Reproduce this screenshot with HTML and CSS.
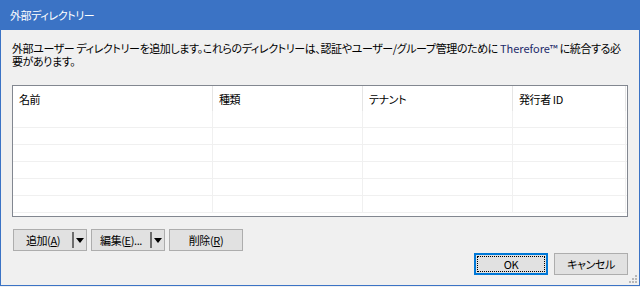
FILE: index.html
```html
<!DOCTYPE html>
<html lang="ja">
<head>
<meta charset="utf-8">
<link rel="stylesheet" href="styles.css">
</head>
<body>
<div class="window">
  <div class="titlebar">外部ディレクトリー</div>
  <div class="content">
    <p class="desc">外部ユーザー ディレクトリーを追加します。これらのディレクトリーは、認証やユーザー/グループ管理のために <span class="brand">Therefore™</span> に統合する必<br>要があります。</p>
    <div class="list">
      <div class="row head">
        <div class="cell c1">名前</div>
        <div class="cell c2">種類</div>
        <div class="cell c3">テナント</div>
        <div class="cell c4">発行者 ID</div>
      </div>
      <div class="row"><div class="cell c1"></div><div class="cell c2"></div><div class="cell c3"></div><div class="cell c4"></div></div>
      <div class="row"><div class="cell c1"></div><div class="cell c2"></div><div class="cell c3"></div><div class="cell c4"></div></div>
      <div class="row"><div class="cell c1"></div><div class="cell c2"></div><div class="cell c3"></div><div class="cell c4"></div></div>
      <div class="row"><div class="cell c1"></div><div class="cell c2"></div><div class="cell c3"></div><div class="cell c4"></div></div>
      <div class="row"><div class="cell c1"></div><div class="cell c2"></div><div class="cell c3"></div><div class="cell c4"></div></div>
      <div class="row"><div class="cell c1"></div><div class="cell c2"></div><div class="cell c3"></div><div class="cell c4"></div></div>
    </div>
    <div class="toolbar">
      <div class="btn split"><span class="lbl">追加(<u>A</u>)</span><span class="sep"></span><span class="arrow"></span></div>
      <div class="btn split"><span class="lbl">編集(<u>E</u>)...</span><span class="sep"></span><span class="arrow"></span></div>
      <div class="btn">削除(<u>R</u>)</div>
    </div>
    <div class="footer">
      <div class="btn default"><span class="focus">OK</span></div>
      <div class="btn">キャンセル</div>
    </div>
  </div>
  <svg class="grip" width="8" height="8" viewBox="0 0 8 8">
    <rect x="6" y="0" width="2" height="2" fill="#b8b8b8"/>
    <rect x="3" y="3" width="2" height="2" fill="#b8b8b8"/>
    <rect x="6" y="3" width="2" height="2" fill="#b8b8b8"/>
    <rect x="0" y="6" width="2" height="2" fill="#b8b8b8"/>
    <rect x="3" y="6" width="2" height="2" fill="#b8b8b8"/>
    <rect x="6" y="6" width="2" height="2" fill="#b8b8b8"/>
  </svg>
</div>
</body>
</html>
```

FILE: styles.css
```css
* { box-sizing: border-box; }
html, body { margin: 0; padding: 0; }
body {
  width: 640px;
  height: 287px;
  overflow: hidden;
  font-family: "Noto Sans CJK JP", "Noto Sans", sans-serif;
  font-size: 11px;
  letter-spacing: -0.4px;
  font-feature-settings: "palt";
  color: #000;
  background: #f0f0f0;
}
.window {
  position: relative;
  width: 640px;
  height: 286px;
  border: 1px solid #3b73c5;
  border-top: none;
  background: #f0f0f0;
  display: flex;
  flex-direction: column;
}
.titlebar {
  height: 30px;
  margin: 0 -1px;
  background: #3b73c5;
  color: #fff;
  padding-left: 10px;
  line-height: 31px;
}
.content {
  padding: 0 11px 0 11px;
  display: flex;
  flex-direction: column;
}
.desc {
  margin: 12px 0 0 0;
  line-height: 13px;
  white-space: nowrap;
}
.brand { color: #1c2a6a; letter-spacing: 0; }
.list {
  margin-top: 17px;
  height: 132px;
  border: 1px solid #828790;
  background: #fff;
  overflow: hidden;
}
.row {
  display: flex;
  height: 17px;
  border-bottom: 1px solid #f0f0f0;
}
.row.head {
  height: 25px;
  border-bottom: none;
}
.cell {
  height: 100%;
  border-right: 1px solid #f0f0f0;
}
.head .cell {
  border-right-color: #e5e5e5;
  padding-left: 6px;
  padding-top: 2px;
  line-height: 23px;
}
.c1 { width: 200px; }
.c2 { width: 150px; }
.c3 { width: 150px; }
.c4 { width: 113px; }
.toolbar {
  margin-top: 12px;
  margin-left: 1px;
  display: flex;
  gap: 4px;
}
.btn {
  width: 74px;
  height: 22px;
  border: 1px solid #adadad;
  background: #e1e1e1;
  display: flex;
  align-items: center;
  justify-content: center;
  line-height: 20px;
}
.btn u { text-decoration: underline; }
.btn.split { justify-content: flex-start; }
.split .lbl { width: 58px; text-align: center; }
.split .sep {
  width: 2px;
  height: 16px;
  background: #6d6d6d;
}
.split .arrow {
  width: 0;
  height: 0;
  margin-left: 2px;
  border-left: 4px solid transparent;
  border-right: 4px solid transparent;
  border-top: 5px solid #000;
}
.footer {
  margin-top: 2px;
  display: flex;
  justify-content: flex-end;
  gap: 6px;
}
.btn.default {
  border: 2px solid #0078d7;
  padding: 1px;
}
.focus {
  width: 100%;
  height: 100%;
  border: 1px dotted #000;
  display: flex;
  align-items: center;
  justify-content: center;
}
.grip {
  position: absolute;
  right: 2px;
  bottom: 2px;
}
```
